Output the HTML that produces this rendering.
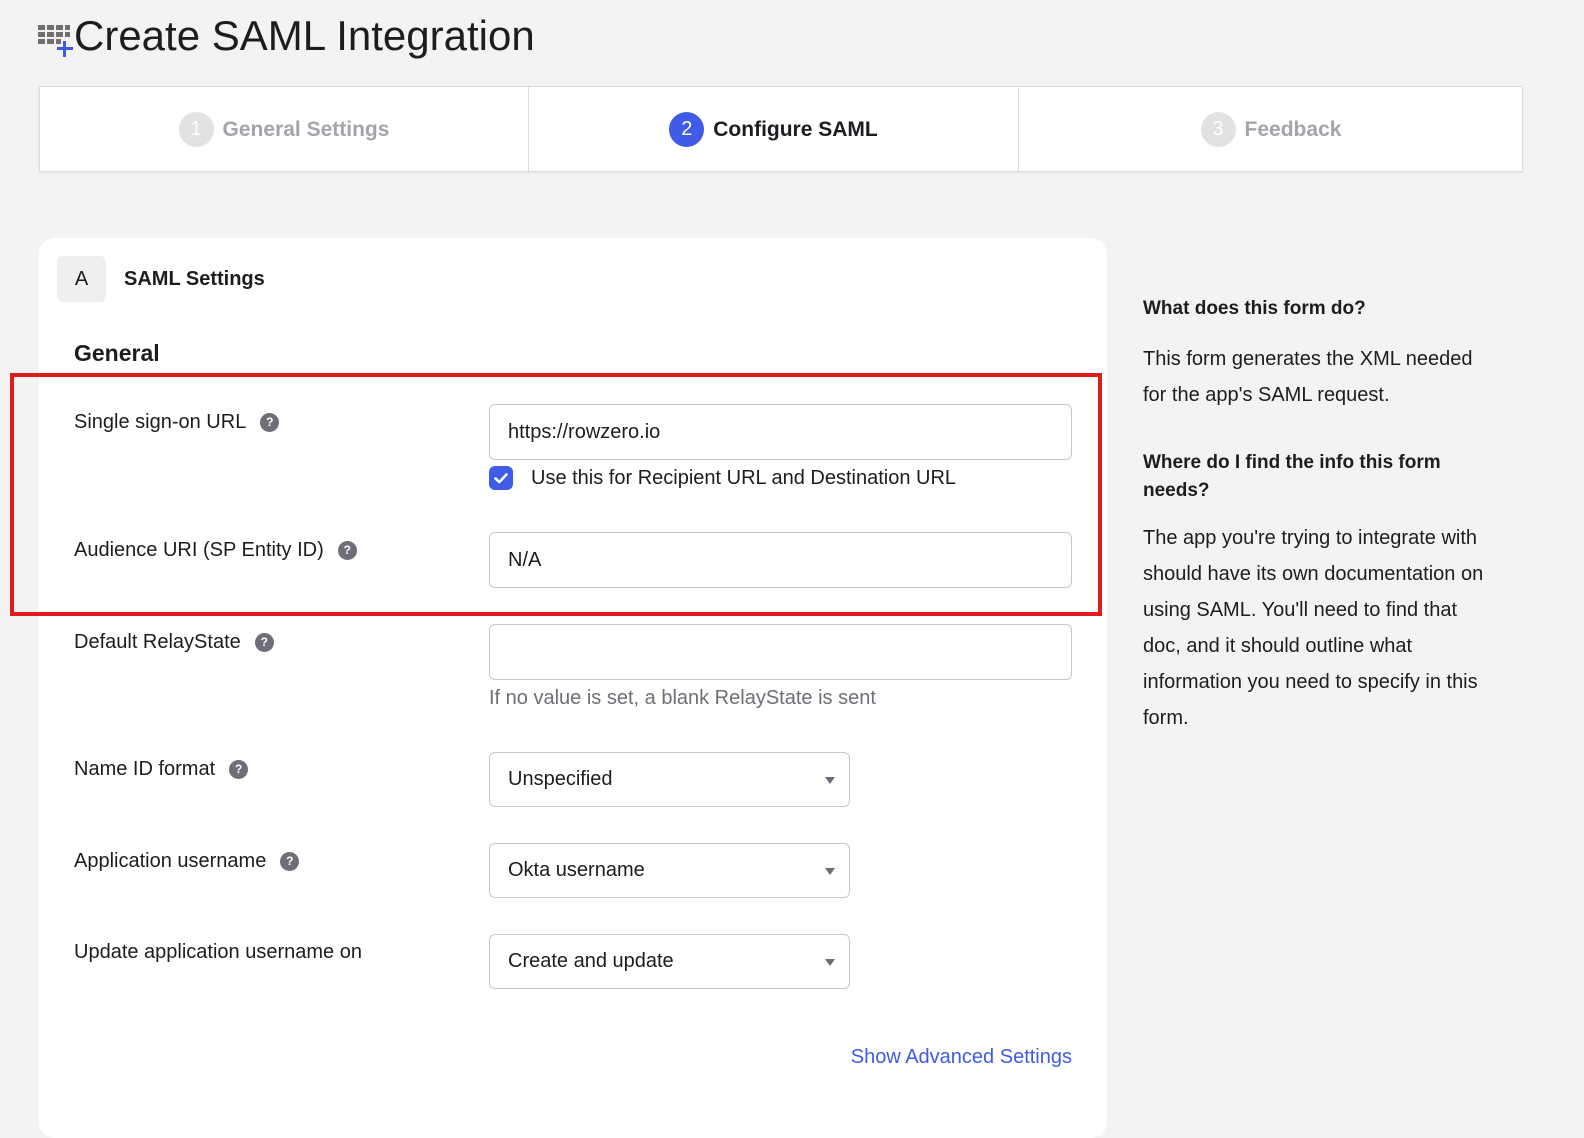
<!DOCTYPE html>
<html><head><meta charset="utf-8"><style>
*{box-sizing:border-box;margin:0;padding:0}
body{width:1584px;height:1123px;background:#f3f3f3;font-family:"Liberation Sans",sans-serif;color:#1d1d21;position:relative;overflow:hidden}
.a{position:absolute;white-space:nowrap}
.inp{position:absolute;background:#fff;border:1px solid #c8c8cc;border-radius:6px;font-size:20px;padding-left:18px;display:flex;align-items:center;color:#1d1d21}
.q{display:inline-block;width:19px;height:19px;border-radius:50%;background:#6e6e78;color:#fff;font-size:12px;font-weight:bold;text-align:center;line-height:19px;vertical-align:2px;margin-left:14px}
.lbl{font-size:20px;color:#1d1d21}
.arr{position:absolute;right:14px;top:24px;width:0;height:0;border-left:5px solid transparent;border-right:5px solid transparent;border-top:7px solid #6e6e78}
.step{position:absolute;top:0;height:85px;display:flex;align-items:center;justify-content:center;font-size:21px;font-weight:bold}
.num{width:35px;height:35px;border-radius:50%;display:inline-flex;align-items:center;justify-content:center;font-size:20px;margin-right:9px;font-weight:normal}
.side{font-size:20px;line-height:36px;color:#1d1d21}
</style></head><body>
<svg class="a" style="left:38px;top:25px" width="38" height="34" viewBox="0 0 38 34">
<g fill="#707070">
<rect x="0" y="0" width="7" height="5"/><rect x="9" y="0" width="7" height="5"/><rect x="18" y="0" width="7" height="5"/><rect x="27" y="0" width="5" height="5"/>
<rect x="0" y="7" width="7" height="5"/><rect x="9" y="7" width="7" height="5"/><rect x="18" y="7" width="7" height="5"/><rect x="27" y="7" width="5" height="5"/>
<rect x="0" y="14" width="7" height="5"/><rect x="9" y="14" width="7" height="5"/><rect x="18" y="14" width="5" height="5"/>
</g>
<rect x="25" y="16" width="3" height="16" fill="#3f5be8"/><rect x="19" y="22" width="16" height="3" fill="#3f5be8"/>
</svg>
<div class="a" style="left:74px;top:12px;font-size:42px;color:#1d1d21">Create SAML Integration</div>

<div class="a" style="left:39px;top:86px;width:1484px;height:86px;background:#fff;border:1px solid #dcdcdf;box-shadow:0 1px 2px rgba(0,0,0,.08)">
 <div class="step" style="left:0;width:488px;color:#a4a4aa"><span class="num" style="background:#e2e2e4;color:#fff">1</span>General Settings</div>
 <div style="position:absolute;left:488px;top:0;width:1px;height:84px;background:#dcdcdf"></div>
 <div class="step" style="left:489px;width:489px;color:#1d1d21"><span class="num" style="background:#3f5be8;color:#fff">2</span>Configure SAML</div>
 <div style="position:absolute;left:978px;top:0;width:1px;height:84px;background:#dcdcdf"></div>
 <div class="step" style="left:979px;width:504px;color:#a4a4aa"><span class="num" style="background:#e2e2e4;color:#fff">3</span>Feedback</div>
</div>

<div class="a" style="left:39px;top:238px;width:1068px;height:900px;background:#fff;border-radius:16px"></div>
<div class="a" style="left:57px;top:256px;width:49px;height:46px;background:#efeff0;border-radius:6px;font-size:20px;display:flex;align-items:center;justify-content:center">A</div>
<div class="a" style="left:124px;top:268px;font-size:20px;font-weight:bold">SAML Settings</div>
<div class="a" style="left:74px;top:340px;font-size:23px;font-weight:bold">General</div>

<div class="a lbl" style="left:74px;top:411px">Single sign-on URL<span class="q">?</span></div>
<div class="inp" style="left:489px;top:404px;width:583px;height:56px">https://rowzero.io</div>
<div class="a" style="left:489px;top:466px;width:24px;height:24px;border-radius:6px;background:#3f5be8"><svg width="24" height="24" viewBox="0 0 24 24"><path d="M6.5 12.5l3.8 3.6 7.2-7.6" fill="none" stroke="#fff" stroke-width="2.6" stroke-linecap="round" stroke-linejoin="round"/></svg></div>
<div class="a lbl" style="left:531px;top:467px">Use this for Recipient URL and Destination URL</div>

<div class="a lbl" style="left:74px;top:539px">Audience URI (SP Entity ID)<span class="q">?</span></div>
<div class="inp" style="left:489px;top:532px;width:583px;height:56px">N/A</div>

<div class="a" style="left:10px;top:373px;width:1092px;height:243px;border:4px solid #e01b1b"></div>

<div class="a lbl" style="left:74px;top:631px">Default RelayState<span class="q">?</span></div>
<div class="inp" style="left:489px;top:624px;width:583px;height:56px"></div>
<div class="a" style="left:489px;top:687px;font-size:20px;color:#6e6e78">If no value is set, a blank RelayState is sent</div>

<div class="a lbl" style="left:74px;top:758px">Name ID format<span class="q">?</span></div>
<div class="inp" style="left:489px;top:752px;width:361px;height:55px">Unspecified<span class="arr"></span></div>

<div class="a lbl" style="left:74px;top:850px">Application username<span class="q">?</span></div>
<div class="inp" style="left:489px;top:843px;width:361px;height:55px">Okta username<span class="arr"></span></div>

<div class="a lbl" style="left:74px;top:941px">Update application username on</div>
<div class="inp" style="left:489px;top:934px;width:361px;height:55px">Create and update<span class="arr"></span></div>

<div class="a" style="right:512px;top:1046px;font-size:20px;color:#3f5be8">Show Advanced Settings</div>

<div class="a" style="left:1143px;top:298px;font-size:19px;font-weight:bold">What does this form do?</div>
<div class="a side" style="left:1143px;top:341px;white-space:normal;width:420px">This form generates the XML needed<br>for the app's SAML request.</div>
<div class="a" style="left:1143px;top:449px;font-size:19px;font-weight:bold;line-height:28px;white-space:normal;width:420px">Where do I find the info this form<br>needs?</div>
<div class="a side" style="left:1143px;top:520px;white-space:normal;width:430px">The app you're trying to integrate with<br>should have its own documentation on<br>using SAML. You'll need to find that<br>doc, and it should outline what<br>information you need to specify in this<br>form.</div>
</body></html>
